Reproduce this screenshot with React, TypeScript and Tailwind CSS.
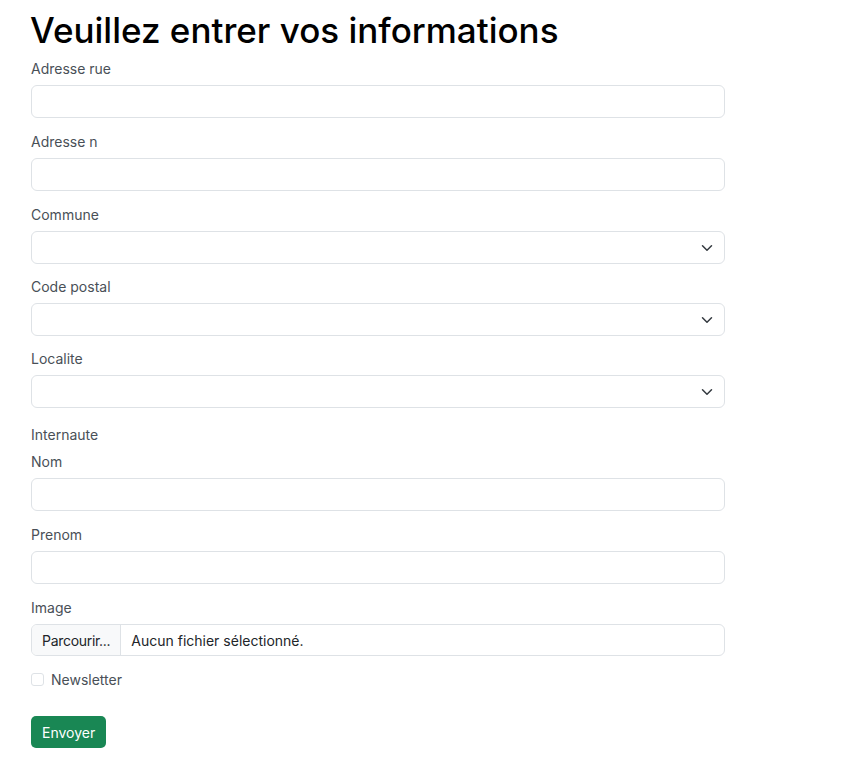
const fieldClass =
  'block w-full h-[33px] rounded-[6px] border border-[#dee2e6] bg-white px-3 text-[14px] text-[#212529]';

const Label = ({ children }: { children: string }) => (
  <label className="block text-[14px] leading-[21px] text-[#495057] mb-[6px]">{children}</label>
);

const Chevron = () => (
  <svg
    className="absolute right-[12px] top-1/2 -translate-y-1/2 pointer-events-none"
    width="12"
    height="12"
    viewBox="0 0 16 16"
    fill="none"
    stroke="#343a40"
    strokeWidth="2"
    strokeLinecap="round"
    strokeLinejoin="round"
  >
    <path d="m2 5 6 6 6-6" />
  </svg>
);

const TextField = ({ label }: { label: string }) => (
  <div className="mb-[13px]">
    <Label>{label}</Label>
    <input type="text" className={fieldClass} />
  </div>
);

const SelectField = ({ label }: { label: string }) => (
  <div className="mb-[12px]">
    <Label>{label}</Label>
    <div className="relative">
      <select className={fieldClass + ' appearance-none h-[32px]'}>
        <option value=""></option>
      </select>
      <Chevron />
    </div>
  </div>
);

export default function App() {
  return (
    <div
      className="min-h-screen bg-white pl-[31px] pt-[6px]"
      style={{ fontFamily: '"Inter", "Noto Sans", sans-serif' }}
    >
      <h1 className="text-[35px] leading-[48px] font-medium text-black mb-[4px] -ml-[1px]">
        Veuillez entrer vos informations
      </h1>
      <form className="w-[694px]" onSubmit={(e) => e.preventDefault()}>
        <TextField label="Adresse rue" />
        <TextField label="Adresse n" />
        <SelectField label="Commune" />
        <SelectField label="Code postal" />
        <SelectField label="Localite" />

        <div className="mt-[16px] text-[14px] leading-[21px] text-[#495057] mb-[6px]">Internaute</div>
        <TextField label="Nom" />
        <TextField label="Prenom" />

        <div className="mb-[13px]">
          <Label>Image</Label>
          <div className="flex h-[32px] rounded-[6px] border border-[#dee2e6] overflow-hidden text-[14px] text-[#212529]">
            <span className="flex items-center px-[10px] bg-[#f8f9fa] border-r border-[#dee2e6] tracking-[-0.3px]">
              Parcourir...
            </span>
            <span className="flex items-center px-[10px]">Aucun fichier sélectionné.</span>
          </div>
        </div>

        <label className="flex items-center gap-[7px] text-[14px] leading-[21px] text-[#495057]">
          <span className="w-[13px] h-[13px] rounded-[3px] border border-[#dee2e6] bg-white" />
          Newsletter
        </label>

        <button
          type="submit"
          className="mt-[26px] h-[32px] px-[11px] rounded-[5px] bg-[#198754] text-white text-[14px]"
        >
          Envoyer
        </button>
      </form>
    </div>
  );
}
